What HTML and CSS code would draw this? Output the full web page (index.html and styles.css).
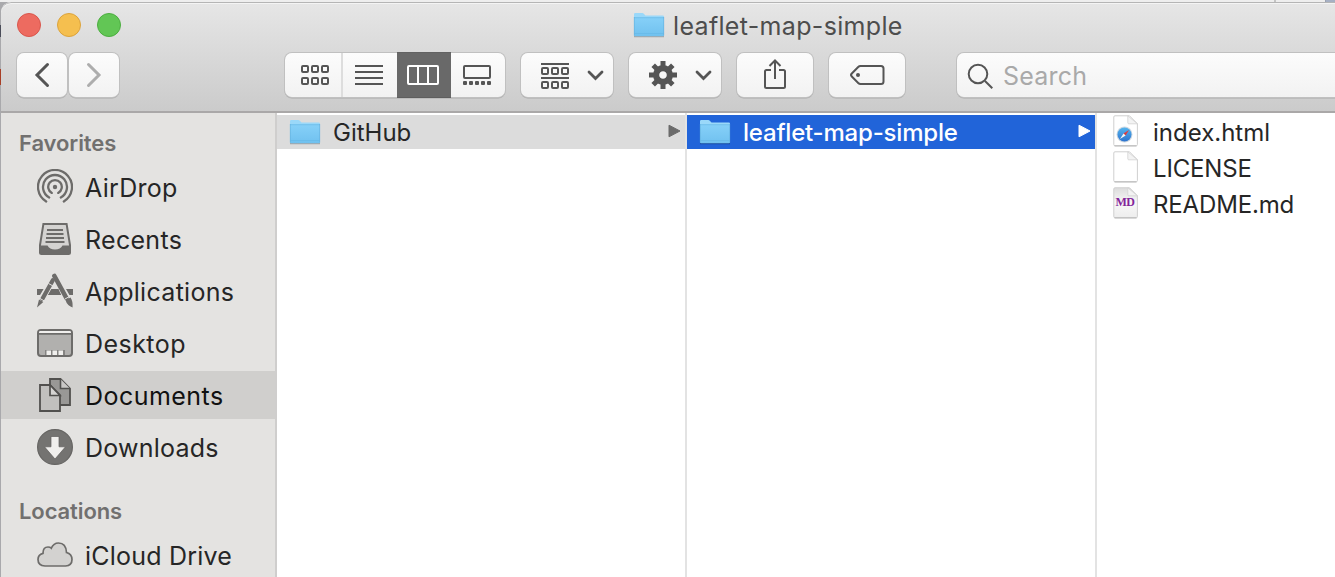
FILE: index.html
```html
<!DOCTYPE html>
<html lang="en">
<head>
<meta charset="utf-8">
<title>leaflet-map-simple</title>
<link rel="stylesheet" href="styles.css">
</head>
<body>
<svg width="0" height="0" class="defs">
  <defs>
    <linearGradient id="folder-front" x1="0" y1="0" x2="0" y2="1"><stop offset="0" stop-color="#86d0f8"/><stop offset="1" stop-color="#70c1ef"/></linearGradient>
    <linearGradient id="paper-grey" x1="0" y1="0" x2="0" y2="1"><stop offset="0" stop-color="#dcdcdc"/><stop offset=".5" stop-color="#f8f8f8"/><stop offset="1" stop-color="#ededed"/></linearGradient>
    <linearGradient id="compass" x1="0" y1="0" x2="0" y2="1"><stop offset="0" stop-color="#55b5ee"/><stop offset="1" stop-color="#2c73cf"/></linearGradient>
    <symbol id="folder" viewBox="0 0 32 26">
      <path d="M1 24.5h30" stroke="#000" stroke-opacity=".25" stroke-width="1.5"/>
      <path d="M1 6V2.2Q1 1 2.200 1H9.200Q10.200 1 10.800 1.700L12 3.100Q12.400 3.600 13.200 3.600H29.800Q31 3.600 31 4.800V8H1Z" fill="#9ad8f9"/>
      <path d="M1 5.500H31V23.200Q31 24.200 30 24.200H2Q1 24.200 1 23.200Z" fill="url(#folder-front)"/>
      <path d="M1 5.700H31M1.500 21.500H30.500" stroke="#66b9e6" stroke-width=".7"/>
      <path d="M1.300 5V23.500M30.700 5V23.500" stroke="#61afdc" stroke-width=".6"/>
    </symbol>
    <symbol id="page" viewBox="0 0 26 32">
      <path d="M2 .8H16.500L24.400 8.700V29.500Q24.400 30.800 23.200 30.800H2Q.8 30.800.8 29.500V2Q.8.8 2 .8Z" stroke="#cfcfcf"/>
      <path d="M1.500 30.900H23.500" stroke="#b5b5b5" fill="none"/>
      <path d="M14.800.8V7.800Q14.800 8.800 15.800 8.800H24.400Z" fill="#f3f3f3" stroke="#d2d2d2" stroke-width=".8"/>
    </symbol>
  </defs>
</svg>
<div class="window">
  <header class="chrome">
    <div class="titlebar">
      <div class="lights"><i class="light red"></i><i class="light yellow"></i><i class="light green"></i></div>
      <div class="title"><svg class="folder"><use href="#folder"/></svg><span class="title-text">leaflet-map-simple</span></div>
    </div>
    <div class="tools">
      <div class="nav">
        <button class="btn square"><svg width="50" height="44"><path d="M30.500 12.500 20 23 30.500 33.500" class="line heavy"/></svg></button>
        <button class="btn square"><svg width="50" height="44"><path d="M19.500 12.500 30 23 19.500 33.500" class="line heavy dim"/></svg></button>
      </div>
      <div class="segments">
        <button class="seg first"><svg width="56" height="44"><g class="line"><rect x="17" y="14" width="6" height="6" rx="1"/><rect x="27" y="14" width="6" height="6" rx="1"/><rect x="37" y="14" width="6" height="6" rx="1"/><rect x="17" y="26" width="6" height="6" rx="1"/><rect x="27" y="26" width="6" height="6" rx="1"/><rect x="37" y="26" width="6" height="6" rx="1"/></g></svg></button>
        <button class="seg"><svg width="54" height="44"><path class="line" d="M12 14H40M12 20H40M12 26H40M12 32H40"/></svg></button>
        <button class="seg active"><svg width="54" height="44"><g class="line light-line"><rect x="11" y="14" width="30" height="18" rx="1"/><path d="M21 14V32M31 14V32"/></g></svg></button>
        <button class="seg last"><svg width="54" height="44"><rect class="line" x="13" y="14" width="26" height="12" rx="1"/><g fill="#555"><rect x="12" y="29" width="4" height="4" rx="1"/><rect x="18" y="29" width="4" height="4" rx="1"/><rect x="24" y="29" width="4" height="4" rx="1"/><rect x="30" y="29" width="4" height="4" rx="1"/><rect x="36" y="29" width="4" height="4" rx="1"/></g></svg></button>
      </div>
      <button class="btn menu"><svg width="92" height="44"><g class="line"><path d="M20 12H48M20 26H48"/><rect x="21" y="16" width="6" height="6" rx="1"/><rect x="31" y="16" width="6" height="6" rx="1"/><rect x="41" y="16" width="6" height="6" rx="1"/><rect x="21" y="30" width="6" height="6" rx="1"/><rect x="31" y="30" width="6" height="6" rx="1"/><rect x="41" y="30" width="6" height="6" rx="1"/></g><path d="M68 20 74.500 26.500 81 20" class="line chev"/></svg></button>
      <button class="btn menu"><svg width="92" height="44"><g transform="translate(34 23)"><circle r="6.900" fill="none" stroke="#555" stroke-width="6.200"/><g stroke="#555" stroke-width="5"><path d="M0-14V-8M0 14V8M-14 0H-8M14 0H8M-9.800-9.800-6-6M9.800 9.800 6 6M-9.800 9.800-6 6M9.800-9.800 6-6"/></g></g><path d="M68 20 74.500 26.500 81 20" class="line chev"/></svg></button>
      <button class="btn single"><svg width="76" height="44"><path class="line" d="M34 18H29.500Q28 18 28 19.500V34.500Q28 36 29.500 36H46.500Q48 36 48 34.500V19.500Q48 18 46.500 18H42M38 27V8.500M32.500 14 38 8.500 43.500 14"/></svg></button>
      <button class="btn single"><svg width="76" height="44"><path class="line" d="M31.500 14H52Q54.500 14 54.500 16.500V29.500Q54.500 32 52 32H31.500Q30.200 32 29.200 31L22.800 24.500Q21.300 23 22.800 21.500L29.200 15Q30.200 14 31.500 14Z"/><circle cx="29" cy="23" r="2" fill="#555"/></svg></button>
      <div class="search"><svg width="46" height="44"><circle cx="21" cy="22" r="9.300" class="line"/><path d="M28 29 35.300 36.300" class="line"/></svg><span class="search-text">Search</span></div>
    </div>
  </header>
  <main class="content">
    <aside class="sidebar">
      <h2 class="heading favorites">Favorites</h2>
      <ul class="places">
        <li class="place"><svg class="icon"><g class="glyph rings" stroke-linecap="round"><path d="M9.200 32.500A17 17 0 1 1 26.800 32.500M12.200 28.500A12 12 0 1 1 23.800 28.500M14.800 23.900A6.800 6.800 0 1 1 21.200 23.900"/></g><circle cx="18" cy="18" r="2.200" fill="#6d6c6a"/></svg><span class="w-airdrop">AirDrop</span></li>
        <li class="place"><svg class="icon"><path class="glyph" d="M6.400 3H29.600L33 24V31.500Q33 33 31.500 33H4.500Q3 33 3 31.500V24Z" fill="#d4d3d1"/><path d="M3 24.500H10.500Q12.500 28.500 18 28.500T25.500 24.500H33V31.500Q33 33 31.500 33H4.500Q3 33 3 31.500Z" fill="#6d6c6a"/><path class="glyph" d="M10 9H26M9.500 13H26.500M9 17H27M8.500 21H27.500" stroke-width="1.700"/></svg><span class="w-recents">Recents</span></li>
        <li class="place"><svg class="icon"><path d="M0 16H36V22H0Z" fill="#6d6c6a"/><path d="M16.500 6 2.500 30M17 2 33 30" stroke="#e4e3e1" stroke-width="7"/><path d="M12 16H24.500L27 22H9.500Z" fill="#6d6c6a"/><path d="M15.800 7 5.300 26M17.400 3 29.400 25" stroke="#e4e3e1" stroke-width="6.500"/><path d="M14.500 16H21.500L24 22H11Z" fill="#6d6c6a"/><path d="M15.800 7.300 5.300 26" stroke="#6d6c6a" stroke-width="4.200" stroke-linecap="round"/><path d="M17.400 3 29.400 25" stroke="#6d6c6a" stroke-width="4.600" stroke-linecap="round"/><path d="M11.500 10.500 16 13" stroke="#e4e3e1"/><path d="M2 26.500 6.300 29 0 34.500ZM28.500 27 33.500 24.500Q36 28 35.600 34.500Q30 32.500 28.500 27Z" fill="#6d6c6a"/><path d="M2.500 25.200 7 27.800M28 26 33 23.200" stroke="#e4e3e1" stroke-width="1"/></svg><span class="w-applications">Applications</span></li>
        <li class="place"><svg class="icon"><rect x="1" y="5" width="34" height="26" rx="3" fill="#b1b0ae" class="glyph"/><path d="M3 6H33Q34 6 34 7.500V8H2V7.500Q2 6 3 6Z" fill="#f0efed"/><path class="glyph thin" d="M1 8.900H35"/><path d="M8 25H28V30H8Z" fill="#858482"/><path d="M9.500 25.500h4.500v4.500h-4.500ZM15.500 25.500h4.500v4.500h-4.500ZM21.500 25.500h4.500v4.500h-4.500Z" fill="#f0efed"/></svg><span class="w-desktop">Desktop</span></li>
        <li class="place selected"><svg class="icon"><path d="M13 2H23.500L33 11.500V28H13Z" fill="#999896" stroke="#51504e" stroke-width="1.800"/><path d="M23.500 2V11.500H33" fill="#c9c8c6" stroke="#51504e" stroke-width="1.600"/><path d="M3 8H13L23 18V34H3Z" fill="#c1c0be" stroke="#51504e" stroke-width="1.800"/><path d="M13 8V18.500H23Z" fill="#d5d4d2" stroke="#51504e" stroke-width="1.700"/></svg><span class="w-documents">Documents</span></li>
        <li class="place"><svg class="icon"><circle cx="18" cy="18" r="17.400" fill="#747371" stroke="#666563" stroke-width="1.200"/><path d="M14 7.500H22V17.800H28.500L18 30 7.500 17.800H14Z" fill="#f0efed" stroke="#5e5d5b" stroke-width=".7"/></svg><span class="w-downloads">Downloads</span></li>
      </ul>
      <h2 class="heading locations">Locations</h2>
      <ul class="places">
        <li class="place"><svg class="icon"><path d="M8 29Q1 28.500 1 22.500Q1 17.500 6 16.300Q6 10 11 10Q13 10 14.300 11.200Q16.500 6 21.500 6Q29 6 29.500 15.500Q35 17 35 22.500Q35 28.500 28.500 29Z" class="glyph thin" fill="#d3d2d0"/></svg><span class="w-icloud">iCloud Drive</span></li>
      </ul>
    </aside>
    <section class="column">
      <div class="row trail"><svg class="folder"><use href="#folder"/></svg><span>GitHub</span><svg class="arrow" viewBox="0 0 13 14"><path d="M1 1.200V12.800L12 7Z" fill="#6b6b6b" stroke="#6b6b6b" stroke-linejoin="round"/></svg></div>
    </section>
    <section class="column">
      <div class="row current"><svg class="folder"><use href="#folder"/></svg><span>leaflet-map-simple</span><svg class="arrow" viewBox="0 0 13 14"><path d="M1 1.200V12.800L12 7Z" fill="#fff" stroke="#fff" stroke-linejoin="round"/></svg></div>
    </section>
    <section class="column files">
      <div class="row"><svg class="file"><use href="#page" fill="#fff"/><circle cx="11.500" cy="19.500" r="8" fill="#d0d9e2"/><circle cx="11.500" cy="19.500" r="7" fill="url(#compass)"/><path d="M16 15 12.600 20.600 10.500 18.500Z" fill="#e03c3c"/><path d="M7 24 10.500 18.500 12.600 20.600Z" fill="#f5f5f5"/></svg><span>index.html</span></div>
      <div class="row"><svg class="file"><use href="#page" fill="#fff"/></svg><span class="w-license">LICENSE</span></div>
      <div class="row"><svg class="file"><use href="#page" fill="url(#paper-grey)"/><text x="12" y="18.500" class="md">MD</text></svg><span class="w-readme">README.md</span></div>
    </section>
  </main>
</div>
</body>
</html>
```
FILE: styles.css
```css
* { box-sizing: border-box; }
body {
  margin: 0;
  height: 577px;
  overflow: hidden;
  padding: 2px 0 0 1px;
  font: 25px/34px Inter, "Liberation Sans", sans-serif;
  color: #262626;
  background:
    linear-gradient(#9aa1b0, #9aa1b0) 1325px 0 / 1px 2px no-repeat,
    linear-gradient(#a6b0c4, #a6b0c4) 1326px 0 / 9px 2px no-repeat,
    linear-gradient(#c4c4c4, #c4c4c4) 1274px 0 / 2px 2px no-repeat,
    linear-gradient(#eeeeee, #eeeeee) 0 0 / 100% 2px no-repeat,
    linear-gradient(#4b4d59, #4b4d59) 0 25px / 1px 12px no-repeat,
    linear-gradient(#a83f27, #a83f27) 0 69px / 1px 16px no-repeat,
    #a9a9ac;
}
.defs { position: absolute; }
.window { height: 575px; border-radius: 10px 0 0 0; overflow: hidden; background: #fff; }
.chrome {
  height: 111px;
  background: linear-gradient(#e6e6e6, #cbcbcb);
  border-top: 1px solid #b5b5b5;
  border-bottom: 2px solid #aaa8a8;
  box-shadow: inset 0 1px #f4f4f4;
  border-radius: 10px 0 0 0;
}
.titlebar { height: 50px; display: flex; padding-top: 5px; }
.lights { display: flex; gap: 16px; padding: 5px 0 0 16px; width: 632px; }
.light { width: 24px; height: 24px; border-radius: 50%; border: 1px solid; }
.red { background: #ed6b60; border-color: #d9564c; }
.yellow { background: #f5bf4f; border-color: #dca33c; }
.green { background: #62c655; border-color: #4cae40; }
.title { display: flex; align-items: center; gap: 8px; height: 34px; color: #4d4d4d; }
.title-text { padding-top: 2px; letter-spacing: .33px; }
.folder { width: 32px; height: 26px; flex: none; }
.tools { display: flex; padding-left: 16px; }
.nav { display: flex; gap: 2px; margin-right: 166px; }
button { font: inherit; padding: 0; border: 0; display: flex; align-items: flex-start; }
.btn, .segments, .search {
  height: 44px;
  border-radius: 7px;
  background: linear-gradient(#fcfcfc, #f2f2f2);
  box-shadow: 0 0 0 1px #c0c0c0, 0 1px 0 .5px #a9a9a9;
}
.btn svg, .seg svg, .search svg { display: block; flex: none; margin-top: -1px; }
.square { width: 50px; }
.segments { display: flex; width: 220px; margin-right: 16px; }
.seg { width: 54px; height: 44px; background: none; }
.first { width: 58px; border-right: 2px solid #ddd; }
.seg.active { background: #696969; box-shadow: 0 -1px #626262, 0 1px #5e5e5e; }
.menu { width: 92px; margin-right: 16px; }
.single { width: 76px; margin-right: 16px; }
.single + .single { margin-right: 52px; }
.search { flex: 1; border-radius: 7px 0 0 7px; display: flex; color: #a9a9a9; line-height: 46px; margin-right: -2px; }
.search-text { letter-spacing: .2px; }
.line { fill: none; stroke: #555; stroke-width: 2; }
.light-line { stroke: #fff; }
.heavy { stroke-width: 3; stroke-linecap: round; }
.dim { stroke: #adadad; }
.chev { stroke-width: 2.8; stroke-linecap: round; }
.content { display: flex; height: 464px; }
.sidebar { width: 276px; flex: none; background: #e4e3e1; border-right: 2px solid #cfcecd; }
.heading { margin: 0; height: 40px; padding-left: 18px; font-size: 22px; font-weight: 600; line-height: 40px; color: #71706f; }
.favorites { margin-top: 10px; letter-spacing: -.1px; }
.locations { margin-top: 20px; letter-spacing: -.1px; }
.places { list-style: none; margin: 0; padding: 0; display: grid; gap: 4px; }
.place { height: 48px; display: flex; align-items: center; gap: 12px; padding-left: 36px; }
.place span { line-height: 34px; padding-top: 2px; white-space: nowrap; letter-spacing: .3px; }
.place .w-desktop, .place .w-documents { letter-spacing: .45px; }
.place .w-downloads, .place .w-icloud { letter-spacing: .22px; }
.selected { background: #d0cfcd; color: #111; }
.icon { width: 36px; height: 36px; flex: none; }
.glyph { stroke: #6d6c6a; stroke-width: 2; }
.glyph:not([fill]) { fill: none; }
.rings { stroke-width: 2.3; }
.thin { stroke-width: 1.7; }
.column { width: 410px; flex: none; border-right: 2px solid #e3e3e3; padding-top: 2px; font-size: 24px; }
.files { border: 0; display: grid; gap: 2px; align-content: start; }
.row { height: 34px; display: flex; align-items: center; padding-left: 12px; gap: 12px; white-space: nowrap; }
.row span { padding-top: 2px; }
.files .row { padding-left: 16px; gap: 14px; }
.w-license, .w-readme { letter-spacing: -.15px; }
.trail { background: #dcdcdc; }
.current { background: #2164d9; color: #fff; font-weight: 500; letter-spacing: -.2px; }
.arrow { width: 13px; height: 14px; margin: -2px 4px 0 auto; }
.file { width: 26px; height: 32px; overflow: visible; flex: none; margin-top: -2px; }
.md { font: bold 12px "Liberation Serif", serif; fill: #83259a; text-anchor: middle; letter-spacing: -.5px; }
```
